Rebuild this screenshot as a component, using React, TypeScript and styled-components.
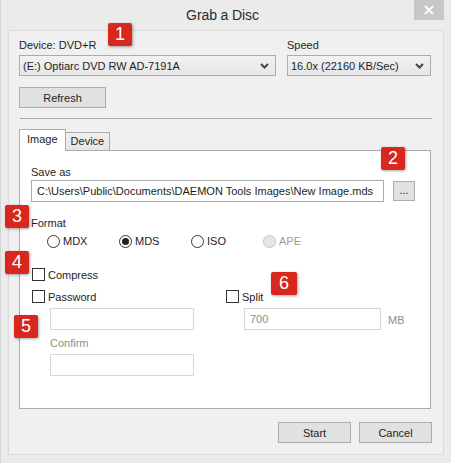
import React from "react";
import styled, { createGlobalStyle } from "styled-components";

const GlobalStyle = createGlobalStyle`
  html, body {
    margin: 0;
    padding: 0;
    background: #ebebeb;
  }
  * {
    box-sizing: border-box;
  }
`;

const FONT = `"Liberation Sans", Arial, sans-serif`;

export default function App() {
  return (
    <>
      <GlobalStyle />
      <Window>
        <TitleBar>
          <span />
          <Title>Grab a Disc</Title>
          <CloseButton aria-label="Close">
            <svg width="10" height="10" viewBox="0 0 10 10">
              <path d="M1 1 L9 9 M9 1 L1 9" stroke="#fff" strokeWidth="1.8" />
            </svg>
          </CloseButton>
        </TitleBar>

        <Client>
          <DeviceRow>
            <Field>
              <Label>Device: DVD+R</Label>
              <Select>
                <span>(E:) Optiarc DVD RW AD-7191A</span>
                <Chevron />
              </Select>
            </Field>
            <Field>
              <Label>Speed</Label>
              <Select>
                <span>16.0x (22160 KB/Sec)</span>
                <Chevron />
              </Select>
            </Field>
          </DeviceRow>

          <Button $width={87} $top={11}>Refresh</Button>
          <Separator />

          <Tabs>
            <Tab $active>Image</Tab>
            <Tab>Device</Tab>
          </Tabs>

          <Panel>
            <Label>Save as</Label>
            <PathRow>
              <Input $width={353}>
                C:\Users\Public\Documents\DAEMON Tools Images\New Image.mds
              </Input>
              <BrowseButton>...</BrowseButton>
            </PathRow>

            <Label $top={14}>Format</Label>
            <RadioRow>
              <Radio label="MDX" />
              <Radio label="MDS" checked />
              <Radio label="ISO" />
              <Radio label="APE" disabled />
            </RadioRow>

            <CheckRow $top={17}>
              <Box />
              <span>Compress</span>
            </CheckRow>

            <OptionsGrid>
              <OptionColumn>
                <CheckRow>
                  <Box />
                  <span>Password</span>
                </CheckRow>
                <Indented>
                  <Input $width={144} $disabled />
                  <Label $top={6} $muted>
                    Confirm
                  </Label>
                  <Input $width={144} $disabled $top={3} />
                </Indented>
              </OptionColumn>
              <OptionColumn>
                <CheckRow>
                  <Box />
                  <span>Split</span>
                </CheckRow>
                <Indented>
                  <SplitRow>
                    <Input $width={137} $disabled $muted>
                      700
                    </Input>
                    <Unit>MB</Unit>
                  </SplitRow>
                </Indented>
              </OptionColumn>
            </OptionsGrid>
          </Panel>

          <Footer>
            <Button $width={73}>Start</Button>
            <Button $width={73}>Cancel</Button>
          </Footer>
        </Client>

        <Badge $x={107} $y={23}>1</Badge>
        <Badge $x={380} $y={147}>2</Badge>
        <Badge $x={4} $y={205}>3</Badge>
        <Badge $x={4} $y={251}>4</Badge>
        <Badge $x={13} $y={315}>5</Badge>
        <Badge $x={270} $y={272} $w={26}>6</Badge>
      </Window>
    </>
  );
}

const Chevron = () => (
  <svg width="9" height="6" viewBox="0 0 9 6">
    <path d="M1 1 L4.5 4.5 L8 1" fill="none" stroke="#444" strokeWidth="2" />
  </svg>
);

const Radio = ({
  label,
  checked,
  disabled,
}: {
  label: string;
  checked?: boolean;
  disabled?: boolean;
}) => (
  <RadioItem $disabled={disabled}>
    <Circle $disabled={disabled}>{checked && <Dot />}</Circle>
    <span>{label}</span>
  </RadioItem>
);

const Window = styled.div`
  position: relative;
  width: 451px;
  height: 463px;
  background: #ebebeb;
  border-left: 1px solid #d4d4d4;
  font-family: ${FONT};
  font-size: 11px;
  color: #1e1e1e;
  display: flex;
  flex-direction: column;
`;

const TitleBar = styled.div`
  height: 30px;
  display: grid;
  grid-template-columns: 1fr auto 1fr;
  padding: 0 7px 0 0;
`;

const Title = styled.div`
  font-size: 14px;
  letter-spacing: -0.1px;
  color: #2b2b2b;
  line-height: 30px;
`;

const CloseButton = styled.div`
  justify-self: end;
  width: 30px;
  height: 20px;
  background: #c7c7c7;
  display: flex;
  align-items: center;
  justify-content: center;
`;

const Client = styled.div`
  margin: 0 7px;
  height: 425px;
  background: #f0f0f0;
  border: 1px solid #dadada;
  padding: 7px 10px 0 10px;
  display: flex;
  flex-direction: column;
`;

const DeviceRow = styled.div`
  display: grid;
  grid-template-columns: 257px 144px;
  column-gap: 11px;
`;

const Field = styled.div`
  display: flex;
  flex-direction: column;
`;

const Label = styled.div<{ $top?: number; $muted?: boolean }>`
  line-height: 15px;
  margin-top: ${(p) => p.$top ?? 0}px;
  color: ${(p) => (p.$muted ? "#8e8e8e" : "#1e1e1e")};
`;

const Select = styled.div`
  margin-top: 2px;
  height: 21px;
  border: 1px solid #acacac;
  background: linear-gradient(#f2f2f2, #e6e6e6);
  display: flex;
  align-items: center;
  justify-content: space-between;
  padding: 0 6px 0 3px;
  white-space: nowrap;
`;

const Button = styled.div<{ $width: number; $top?: number }>`
  width: ${(p) => p.$width}px;
  height: 21px;
  margin-top: ${(p) => p.$top ?? 0}px;
  border: 1px solid #adadad;
  background: #e1e1e1;
  display: flex;
  align-items: center;
  justify-content: center;
`;

const Separator = styled.div`
  margin: 10px 0 0 1px;
  width: 412px;
  height: 1px;
  background: #a9a9a9;
`;

const Tabs = styled.div`
  margin-top: 10px;
  height: 21px;
  display: flex;
  align-items: flex-end;
`;

const Tab = styled.div<{ $active?: boolean }>`
  height: ${(p) => (p.$active ? 22 : 19)}px;
  margin-bottom: -1px;
  position: relative;
  z-index: ${(p) => (p.$active ? 2 : 1)};
  padding: 0 ${(p) => (p.$active ? 7 : 5)}px;
  border: 1px solid #acacac;
  border-bottom: ${(p) => (p.$active ? "none" : "1px solid #acacac")};
  border-left: ${(p) => (p.$active ? "1px solid #acacac" : "none")};
  background: ${(p) => (p.$active ? "#fff" : "linear-gradient(#f0f0f0, #e5e5e5)")};
  line-height: ${(p) => (p.$active ? 19 : 17)}px;
`;

const Panel = styled.div`
  width: 412px;
  height: 259px;
  background: #fff;
  border: 1px solid #acacac;
  padding: 14px 0 0 11px;
  display: flex;
  flex-direction: column;
`;

const PathRow = styled.div`
  display: flex;
  align-items: center;
  gap: 9px;
`;

const Input = styled.div<{
  $width: number;
  $disabled?: boolean;
  $muted?: boolean;
  $top?: number;
}>`
  width: ${(p) => p.$width}px;
  height: 22px;
  margin-top: ${(p) => p.$top ?? 0}px;
  border: 1px solid ${(p) => (p.$disabled ? "#d7d7d7" : "#ababab")};
  background: #fff;
  padding: 0 5px;
  line-height: 20px;
  white-space: nowrap;
  overflow: hidden;
  color: ${(p) => (p.$muted ? "#8e8e8e" : "#1e1e1e")};
`;

const BrowseButton = styled.div`
  width: 22px;
  height: 20px;
  border: 1px solid #adadad;
  background: #e1e1e1;
  display: flex;
  align-items: center;
  justify-content: center;
  line-height: 14px;
  padding-bottom: 2px;
`;

const RadioRow = styled.div`
  margin-top: 2px;
  padding-left: 16px;
  display: flex;
  height: 16px;
`;

const RadioItem = styled.div<{ $disabled?: boolean }>`
  width: 72px;
  display: flex;
  align-items: center;
  gap: 3px;
  color: ${(p) => (p.$disabled ? "#9a9a9a" : "#1e1e1e")};
`;

const Circle = styled.div<{ $disabled?: boolean }>`
  width: 13px;
  height: 13px;
  border-radius: 50%;
  border: 1px solid ${(p) => (p.$disabled ? "#c4c4c4" : "#333")};
  background: ${(p) => (p.$disabled ? "#e6e6e6" : "#fff")};
  display: flex;
  align-items: center;
  justify-content: center;
`;

const Dot = styled.div`
  width: 7px;
  height: 7px;
  border-radius: 50%;
  background: #222;
`;

const CheckRow = styled.div<{ $top?: number }>`
  margin-top: ${(p) => p.$top ?? 0}px;
  height: 17px;
  display: flex;
  align-items: center;
  gap: 3px;
  padding-left: 1px;
`;

const Box = styled.div`
  width: 13px;
  height: 13px;
  border: 1px solid #333;
  background: #fff;
`;

const OptionsGrid = styled.div`
  margin-top: 5px;
  display: grid;
  grid-template-columns: 194px 1fr;
`;

const OptionColumn = styled.div`
  display: flex;
  flex-direction: column;
`;

const Indented = styled.div`
  margin-top: 3px;
  padding-left: 19px;
  display: flex;
  flex-direction: column;
`;

const SplitRow = styled.div`
  display: flex;
  align-items: center;
  gap: 7px;
`;

const Unit = styled.span`
  color: #8e8e8e;
  padding-top: 2px;
`;

const Footer = styled.div`
  margin-top: 13px;
  width: 413px;
  display: flex;
  justify-content: flex-end;
  gap: 8px;
`;

const Badge = styled.div<{ $x: number; $y: number; $w?: number }>`
  position: absolute;
  left: ${(p) => p.$x}px;
  top: ${(p) => p.$y}px;
  width: ${(p) => p.$w ?? 24}px;
  height: 23px;
  border-radius: 2px;
  background: #d8271e;
  color: #fff;
  font-family: "Liberation Sans", "Open Sans", sans-serif;
  font-size: 18px;
  line-height: 23px;
  text-align: center;
  box-shadow: 1px 1px 3px rgba(0, 0, 0, 0.35);
`;
